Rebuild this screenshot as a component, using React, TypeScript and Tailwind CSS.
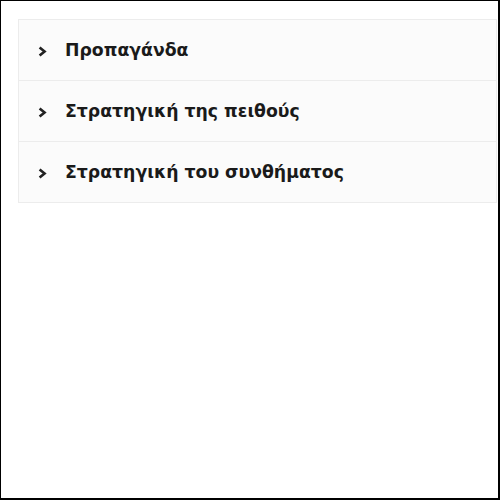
const topics = ["Προπαγάνδα", "Στρατηγική της πειθούς", "Στρατηγική του συνθήματος"]

function Chevron() {
  return (
    <svg width="9" height="11" viewBox="0 0 9 11" className="mt-[2px] shrink-0">
      <path d="M1.6 1.4 L6.6 5.5 L1.6 9.6" fill="none" stroke="#222" strokeWidth="2.6" strokeLinejoin="miter" />
    </svg>
  )
}

export default function App() {
  return (
    <div className="h-[500px] w-[500px] border-l border-t border-r-2 border-b-2 border-black bg-white pl-[17px] pr-[1px] pt-[18px] font-['DejaVu_Sans',Verdana,sans-serif]">
      <div className="border border-[#ececec] bg-[#fbfbfb]">
        {topics.map((t, i) => (
          <button
            key={t}
            className={`flex w-full items-center pl-[19px] text-left ${i > 0 ? "h-[61px] border-t border-[#ececec]" : "h-[60px]"}`}
          >
            <Chevron />
            <span className="ml-[18px] mt-[2px] text-[17.3px] font-bold text-[#1a1a1a]">{t}</span>
          </button>
        ))}
      </div>
    </div>
  )
}
